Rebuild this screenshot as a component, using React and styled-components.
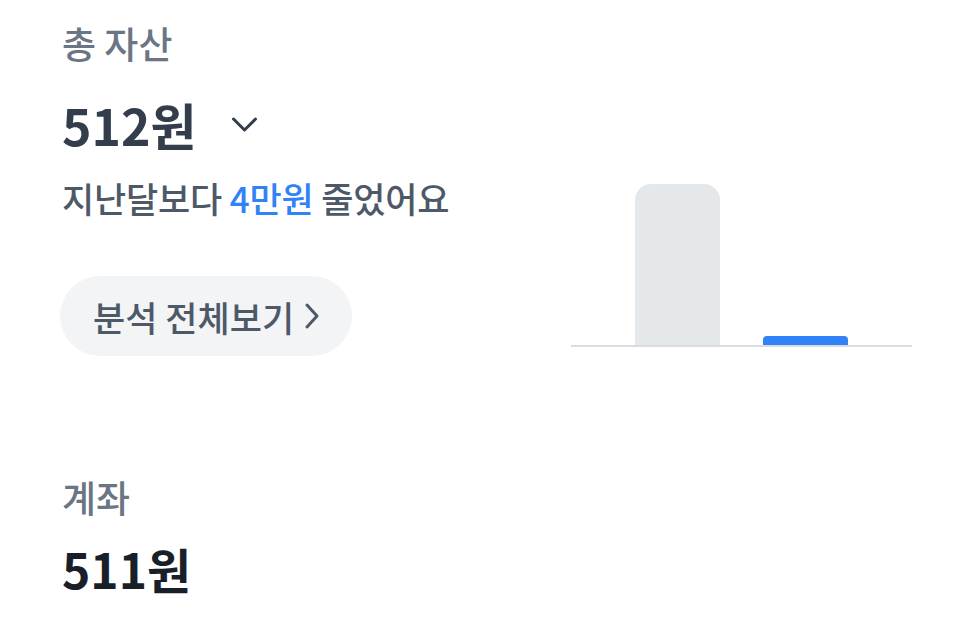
import React from 'react';
import styled, { createGlobalStyle } from 'styled-components';

const GlobalStyle = createGlobalStyle`
  body {
    margin: 0;
    background: #ffffff;
    font-family: "Noto Sans CJK KR", "Noto Sans", sans-serif;
  }
`;

const Page = styled.div`
  width: 971px;
  height: 640px;
  box-sizing: border-box;
  padding: 23px 59px 0 62px;
  overflow: hidden;
`;

const Summary = styled.section`
  display: flex;
  align-items: flex-end;
  justify-content: space-between;
`;

const Info = styled.div`
  display: flex;
  flex-direction: column;
  align-items: flex-start;
`;

const Label = styled.div`
  font-size: 37px;
  line-height: 40px;
  font-weight: 500;
  color: #6b7684;
  margin-top: ${({ gap }) => gap || 0}px;
`;

const AmountRow = styled.div`
  display: flex;
  align-items: center;
  gap: 31px;
  margin-top: 31px;
  cursor: pointer;
`;

const Amount = styled.div`
  font-size: ${({ size }) => size || 50}px;
  line-height: 60px;
  font-weight: 700;
  color: ${({ dark }) => (dark ? '#191f28' : '#333d4b')};
  margin-top: ${({ gap }) => gap || 0}px;
`;

const Compare = styled.div`
  margin-top: 24px;
  font-size: 35px;
  line-height: 40px;
  font-weight: 500;
  color: #4e5968;
  letter-spacing: -0.2px;

  strong {
    color: #3182f6;
    font-weight: 500;
  }
`;

const PillButton = styled.button`
  margin: 58px 0 0 -2px;
  height: 80px;
  padding: 0 32px 0 33px;
  border: none;
  border-radius: 40px;
  background: #f2f4f6;
  display: flex;
  align-items: center;
  gap: 10px;
  font-family: inherit;
  font-size: 35px;
  font-weight: 500;
  color: #4e5968;
  cursor: pointer;
`;

const Chart = styled.div`
  width: 341px;
  box-sizing: border-box;
  display: flex;
  align-items: flex-end;
  gap: 43px;
  padding-left: 64px;
  margin-bottom: 9px;
  border-bottom: 2px solid #d9dde2;
`;

const Bar = styled.div`
  width: 85px;
  height: ${({ h }) => h}px;
  background: ${({ current }) => (current ? '#3182f6' : '#e5e8eb')};
  border-radius: ${({ current }) => (current ? '4px 4px 0 0' : '16px 16px 0 0')};
`;

const Chevron = ({ size = 20, stroke = 3 }) => (
  <svg width={size} height={size} viewBox="0 0 24 24" fill="none">
    <path d="M4 8l8 8 8-8" stroke="#333d4b" strokeWidth={stroke} strokeLinecap="round" strokeLinejoin="round" />
  </svg>
);

const ArrowRight = () => (
  <svg width="16" height="28" viewBox="0 0 16 28" fill="none">
    <path d="M3 3l10 11-10 11" stroke="#4e5968" strokeWidth="3" strokeLinecap="round" strokeLinejoin="round" />
  </svg>
);

export default function App() {
  return (
    <>
      <GlobalStyle />
      <Page>
        <Summary>
          <Info>
            <Label>총 자산</Label>
            <AmountRow>
              <Amount>512원</Amount>
              <Chevron size={33} stroke={2.2} />
            </AmountRow>
            <Compare>
              지난달보다 <strong>4만원</strong> 줄었어요
            </Compare>
            <PillButton>
              분석 전체보기
              <ArrowRight />
            </PillButton>
          </Info>
          <Chart>
            <Bar h={161} />
            <Bar h={9} current />
          </Chart>
        </Summary>
        <Label gap={121}>계좌</Label>
        <Amount dark size={48} gap={21}>511원</Amount>
      </Page>
    </>
  );
}
